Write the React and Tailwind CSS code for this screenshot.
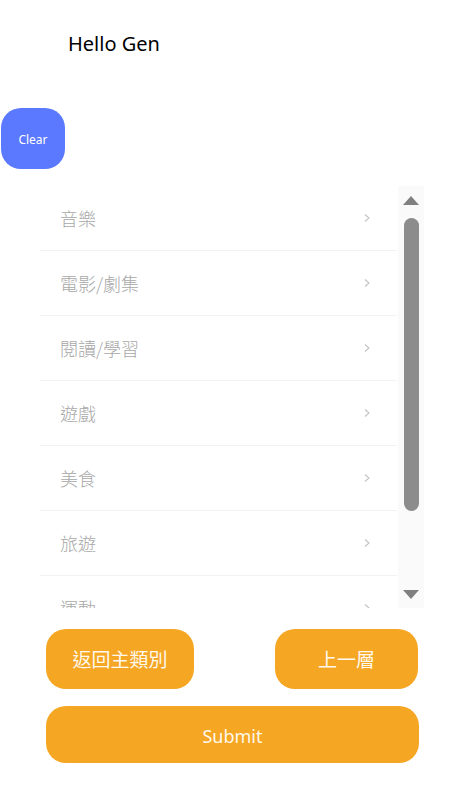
import React from 'react';

const categories = ['音樂', '電影/劇集', '閱讀/學習', '遊戲', '美食', '旅遊', '運動'];

const font = { fontFamily: '"Noto Sans", "Noto Sans CJK TC", sans-serif' };
const cjk = { fontFamily: '"Noto Sans CJK TC", sans-serif' };

const Chevron = () => (
  <svg width="8" height="10" viewBox="0 0 8 10" className="shrink-0">
    <polyline points="2,1.5 6,5 2,8.5" fill="none" stroke="#c2c2c2" strokeWidth="1.1" />
  </svg>
);

const App = () => {
  return (
    <div className="w-[450px] h-[800px] bg-white flex flex-col overflow-hidden" style={font}>
      <div className="pl-[68px] pt-[30px] text-[20px] leading-[28px] text-black">Hello Gen</div>

      <button className="mt-[50px] ml-[1px] w-[64px] h-[61px] rounded-[20px] bg-[#5b79ff] text-white text-[12px] pt-[3px] flex items-center justify-center">
        Clear
      </button>

      <div className="mt-[17px] flex h-[422px]">
        <div className="ml-[40px] w-[357px] overflow-hidden">
          {categories.map((c) => (
            <div key={c} className="h-[65px] shrink-0 flex items-center justify-between pl-[20px] pr-[26px] border-b border-[#f2f2f2]">
              <span className="text-[18px] font-light text-[#a8a8a8]" style={cjk}>{c}</span>
              <Chevron />
            </div>
          ))}
        </div>
        <div className="ml-[1px] w-[26px] bg-[#fafafa] flex flex-col items-center">
          <svg width="16" height="9" viewBox="0 0 16 9" className="mt-[10px]">
            <polygon points="8,0 16,9 0,9" fill="#808080" />
          </svg>
          <div className="mt-[13px] w-[15px] h-[293px] rounded-full bg-[#8c8c8c]" />
          <svg width="16" height="9" viewBox="0 0 16 9" className="mt-auto mb-[9px]">
            <polygon points="0,0 16,0 8,9" fill="#808080" />
          </svg>
        </div>
      </div>

      <div className="mt-[21px] ml-[46px] w-[372px] flex justify-between">
        <button className="w-[148px] h-[60px] rounded-[20px] bg-[#f5a623] text-[#fff8ec] text-[19px] flex items-center justify-center" style={cjk}>
          返回主類別
        </button>
        <button className="w-[143px] h-[60px] rounded-[20px] bg-[#f5a623] text-[#fff8ec] text-[19px] flex items-center justify-center" style={cjk}>
          上一層
        </button>
      </div>

      <button className="mt-[17px] ml-[46px] w-[373px] h-[57px] rounded-[20px] bg-[#f5a623] text-[#fff8ec] text-[18px] pt-[3px] flex items-center justify-center">
        Submit
      </button>
    </div>
  );
};

export default App;
